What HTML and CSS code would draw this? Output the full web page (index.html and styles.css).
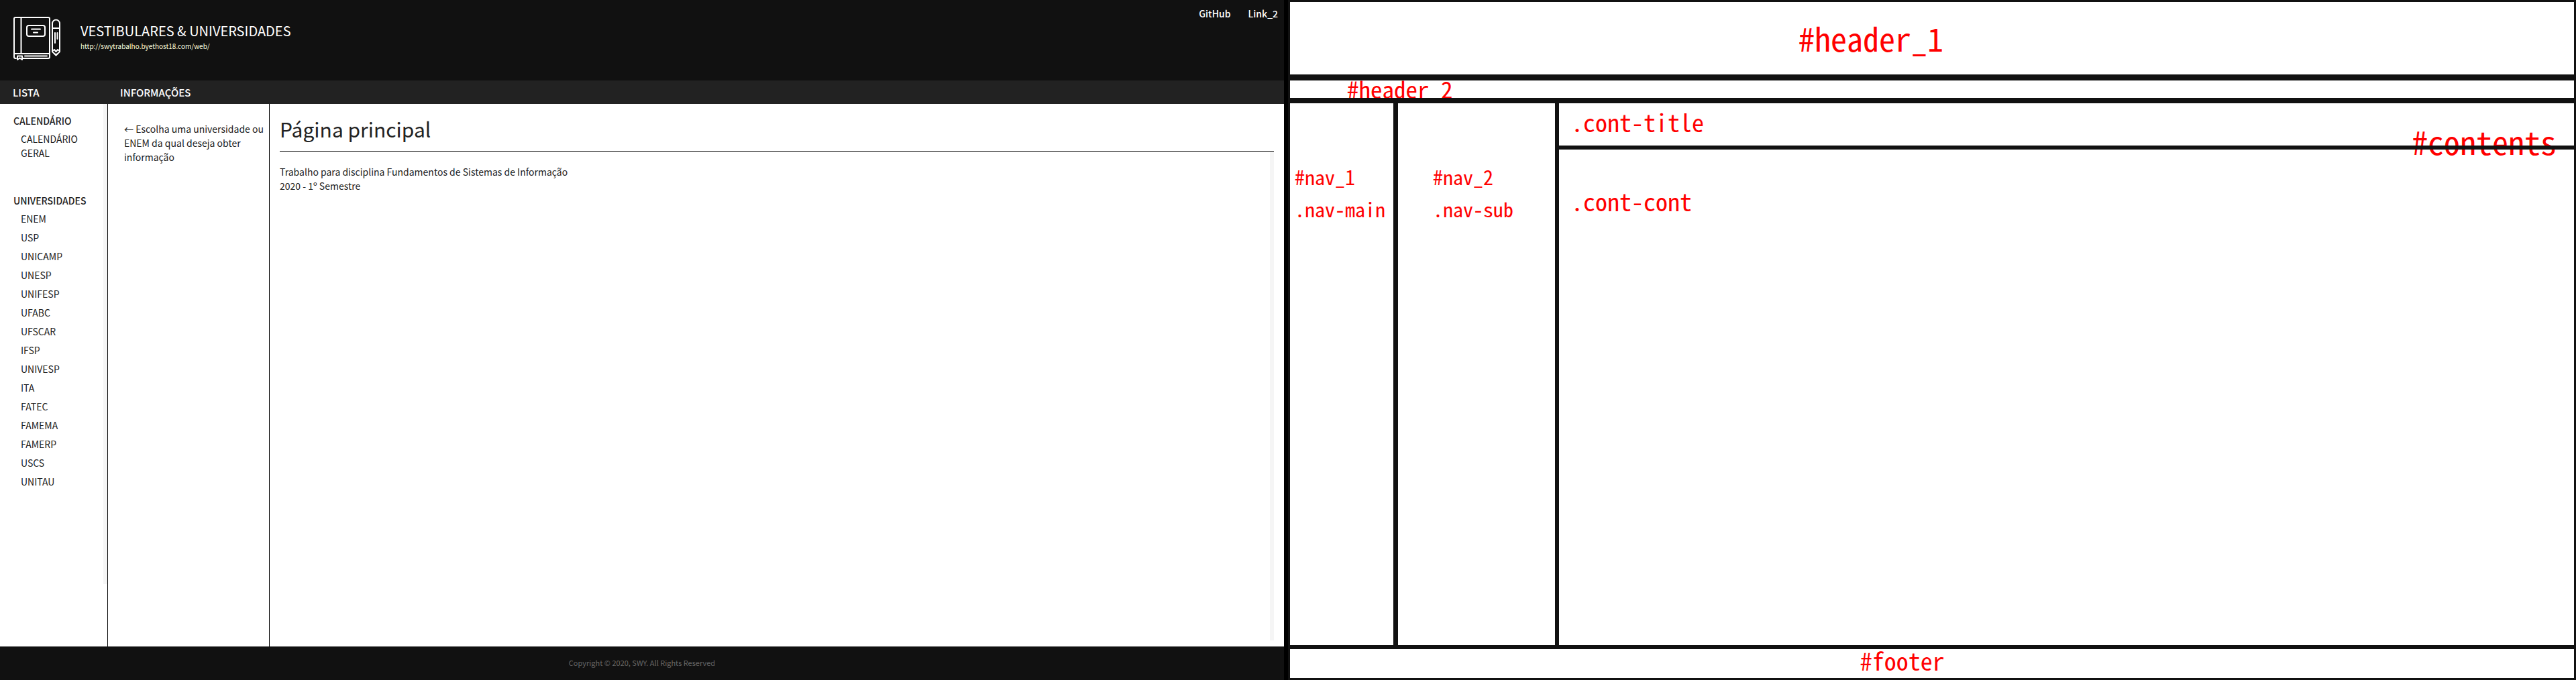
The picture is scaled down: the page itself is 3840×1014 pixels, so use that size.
FILE: index.html
```html
<!DOCTYPE html>
<html lang="pt-BR">
<head>
<meta charset="utf-8">
<title>Vestibulares &amp; Universidades</title>
<link rel="stylesheet" href="styles.css">
</head>
<body>
<div class="screens">
  <div class="site">
    <header class="site-header">
      <svg class="logo" viewBox="0 0 70 70" fill="none" stroke="#fff" stroke-width="2" stroke-linecap="round" stroke-linejoin="round" aria-hidden="true">
        <path d="M4 65H3a2 2 0 0 1-2-2V6a2 2 0 0 1 2-2H52a2 2 0 0 1 2 2V63a2 2 0 0 1-2 2H14"/>
        <path d="M11.500 4V58M1 58H54M17 61.500H50"/>
        <path d="M6 67V61.500H13V67L9.500 64.500Z"/>
        <rect x="20" y="16" width="27" height="16" rx="3"/>
        <path d="M27 21.500H40M30 26.500H36"/>
        <path d="M58 20V13a5.500 5.500 0 0 1 11 0V55L63.500 60.500L58 55ZM58 20H69M62 27V42M65.500 27V36"/>
        <path d="M58 54L61 52L63.500 55L66 52L69 54"/>
        <path d="M62 58.500L63.500 60L65 58.500"/>
      </svg>
      <div class="brand">
        <h1>VESTIBULARES &amp; UNIVERSIDADES</h1>
        <a class="brand-url" href="#">http://swytrabalho.byethost18.com/web/</a>
      </div>
      <nav class="links"><a href="#">GitHub</a><a href="#">Link_2</a></nav>
    </header>
    <div class="bar"><span class="bar-list">LISTA</span><span>INFORMAÇÕES</span></div>
    <main class="columns">
      <nav class="nav-main">
        <div class="nav-scroll">
          <h2>CALENDÁRIO</h2>
          <ul>
            <li><a href="#">CALENDÁRIO GERAL</a></li>
          </ul>
          <h2>UNIVERSIDADES</h2>
          <ul>
            <li><a href="#">ENEM</a></li>
            <li><a href="#">USP</a></li>
            <li><a href="#">UNICAMP</a></li>
            <li><a href="#">UNESP</a></li>
            <li><a href="#">UNIFESP</a></li>
            <li><a href="#">UFABC</a></li>
            <li><a href="#">UFSCAR</a></li>
            <li><a href="#">IFSP</a></li>
            <li><a href="#">UNIVESP</a></li>
            <li><a href="#">ITA</a></li>
            <li><a href="#">FATEC</a></li>
            <li><a href="#">FAMEMA</a></li>
            <li><a href="#">FAMERP</a></li>
            <li><a href="#">USCS</a></li>
            <li><a href="#">UNITAU</a></li>
          </ul>
        </div>
      </nav>
      <aside class="nav-sub">← Escolha uma universidade ou ENEM da qual deseja obter informação</aside>
      <section class="contents">
        <h2 class="cont-title">Página principal</h2>
        <p class="cont-body">Trabalho para disciplina Fundamentos de Sistemas de Informação<br>2020 - 1º Semestre</p>
      </section>
    </main>
    <footer class="site-footer">Copyright © 2020, SWY. All Rights Reserved</footer>
  </div>
  <div class="plan">
    <div class="plan-header1">#header_1</div>
    <div class="plan-header2">#header_2</div>
    <div class="plan-columns">
      <div class="plan-nav1"><span>#nav_1</span><span>.nav-main</span></div>
      <div class="plan-nav2"><span>#nav_2</span><span>.nav-sub</span></div>
      <div class="plan-contents">
        <div class="plan-title">.cont-title</div>
        <div class="plan-label">#contents</div>
        <div class="plan-rule"></div>
        <div class="plan-body">.cont-cont</div>
      </div>
    </div>
    <div class="plan-footer">#footer</div>
  </div>
</div>
</body>
</html>
```
FILE: styles.css
```css
* { box-sizing: border-box; }
body {
  margin: 0;
  background: #fff;
  color: #222;
  font: 14px/21px "Noto Sans CJK JP", "Noto Sans", sans-serif;
}
h1, h2, p, ul { margin: 0; padding: 0; font-weight: 400; }
ul { list-style: none; }
a { color: inherit; text-decoration: none; }

.screens { display: grid; grid-template-columns: 1fr 1fr; min-height: 100vh; }

/* Site */
.site { display: flex; flex-direction: column; border-right: 6px solid #000; }
.site-header {
  display: flex;
  align-items: center;
  gap: 30px;
  height: 120px;
  padding: 0 9px 6px 20px;
  background: #111;
  color: #fff;
}
.logo { width: 70px; height: 70px; }
.brand { display: flex; flex-direction: column; padding-bottom: 4px; }
.brand h1 { font-size: 20px; line-height: 28px; }
.brand-url { font-size: 10px; line-height: 18px; color: #ffd; }
.links {
  display: flex;
  gap: 26px;
  align-self: flex-start;
  margin-left: auto;
  padding-top: 10px;
  font-weight: 500;
}
.bar {
  display: flex;
  height: 35px;
  padding-left: 19px;
  background: #222;
  color: #fff;
  font-size: 15px;
  font-weight: 500;
  line-height: 35px;
}
.bar-list { width: 160px; }

.columns { display: flex; flex: 1; }
.nav-main { width: 161px; border-right: 1px solid #000; }
.nav-scroll { min-height: 716px; padding: 12px 16px 12px 20px; border-right: 6px solid #f5f5f5; }
.nav-scroll h2 { font-size: 14px; font-weight: 500; line-height: 27px; }
.nav-scroll ul { padding-left: 11px; }
.nav-scroll li { padding: 3px 0 4px; }
.nav-scroll ul + h2 { margin-top: 43px; }
.nav-sub { width: 241px; padding: 27px 4px 0 24px; border-right: 1px solid #000; }
.contents { display: flex; flex: 1; flex-direction: column; padding: 0 15px 9px; }
.cont-title { height: 71px; border-bottom: 1px solid #111; font-size: 30px; line-height: 75px; }
.cont-body { flex: 1; padding-top: 20px; border-right: 6px solid #f5f5f5; }
.site-footer {
  height: 50px;
  background: #111;
  color: #666;
  font-size: 11px;
  line-height: 49px;
  text-align: center;
}

/* Layout plan */
.plan {
  display: flex;
  flex-direction: column;
  border: 3px solid #111;
  background: #fff;
  color: #f00;
  font-family: "Noto Sans Mono CJK JP", "Liberation Mono", monospace;
  font-weight: 500;
}
.plan-header1 {
  height: 117px;
  padding-left: 39.6%;
  border-bottom: 9px solid #111;
  font-size: 48px;
  line-height: 106px;
}
.plan-header2 {
  height: 26px;
  padding-left: 85px;
  font-size: 35px;
  line-height: 24px;
}
.plan-columns { position: relative; display: flex; flex: 1; border-top: 8px solid #111; }
.plan-nav1, .plan-nav2 {
  display: flex;
  flex-direction: column;
  padding-top: 85px;
  font-size: 30px;
  line-height: 48px;
}
.plan-nav1 { width: 161px; padding-left: 7px; border-right: 7px solid #111; }
.plan-nav2 { width: 240px; padding-left: 52px; border-right: 6px solid #111; }
.plan-contents { position: relative; flex: 1; font-size: 36px; }
.plan-title { height: 63px; padding-left: 18px; line-height: 55px; }
.plan-label { position: absolute; top: 32px; right: 26px; font-size: 48px; line-height: 48px; }
.plan-rule { position: relative; height: 6px; background: #111; }
.plan-body { padding: 52px 0 0 18px; line-height: 48px; }
.plan-footer {
  height: 49px;
  padding-left: 44.4%;
  border-top: 6px solid #111;
  font-size: 36px;
  line-height: 33px;
}
```
